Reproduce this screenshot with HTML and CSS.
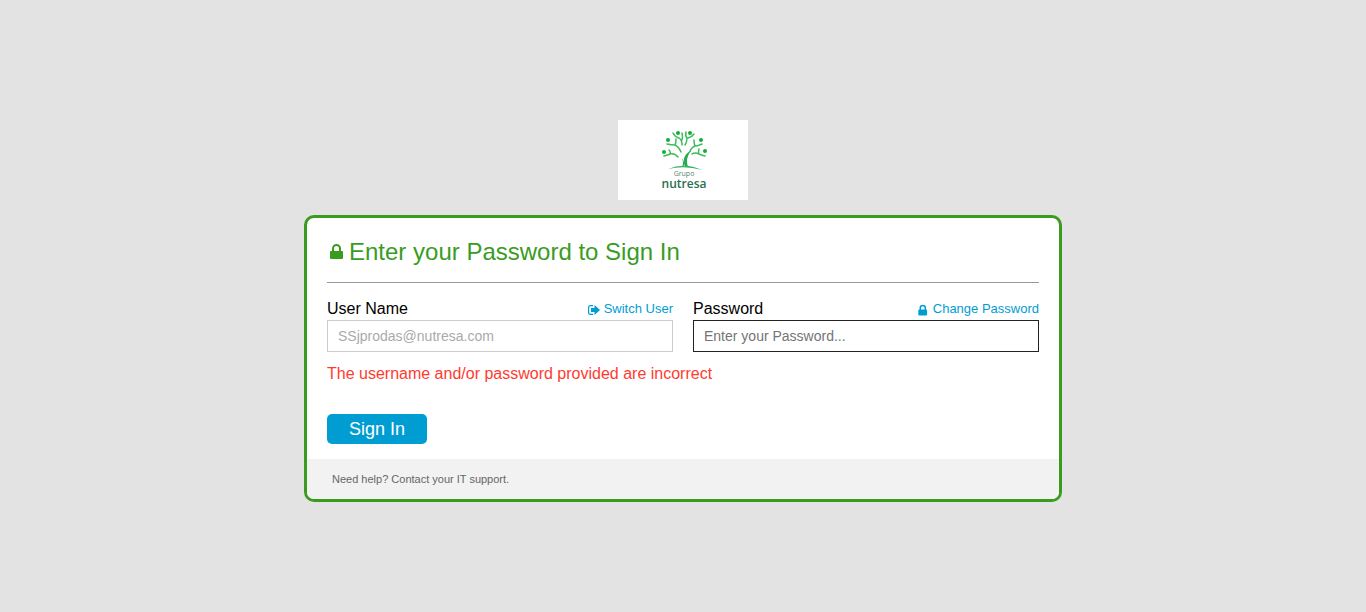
FILE: index.html
```html
<!DOCTYPE html>
<html lang="en">
<head>
<meta charset="utf-8">
<meta name="viewport" content="width=device-width, initial-scale=1">
<title>Sign In</title>
<link rel="stylesheet" href="styles.css">
</head>
<body>
<main class="page">
  <svg class="logo" viewBox="0 0 130 80" role="img" aria-label="Grupo nutresa">
    <g fill="none" stroke="#3cbd5c" stroke-linecap="round" stroke-width="1.5">
      <path d="M55 13Q57 17 61 18Q64 20 64 25M64 13Q65 17 64 20M68 12Q67 16 69 18Q69 22 67 25M76 14Q74 17 70 18M49 24Q54 25 57 25Q61 27 63 32M58 19Q58 23 57 25M84 24Q80 26 77 26Q74 27 72 31M76 20Q76 24 77 26M46 36Q50 35 52 34Q57 33 60 37M51 30Q53 32 52 34M87 36Q83 35 81 34Q77 32 74 34M81 29Q80 32 81 34"/>
    </g>
    <path fill="#25aa4c" d="M72 31Q67 34 66 39Q66 44 67 47L70 47Q68 41 70 36Q71 33 73 31ZM64 38Q66 43 64 47L65 47Q68 43 64 38Z"/>
    <path fill="#35b65a" d="M50 49Q67 42 84 50Q67 45 50 49Z"/>
    <g fill="#12ae39">
      <circle cx="60" cy="13" r="2"/><circle cx="72" cy="13" r="2"/>
      <circle cx="50" cy="20" r="2"/><circle cx="83" cy="20" r="2"/>
      <circle cx="46" cy="32" r="2"/><circle cx="87" cy="31" r="2"/>
    </g>
    <text class="logo-small" x="66" y="56" text-anchor="middle">Grupo</text>
    <text class="logo-name" x="66" y="68" text-anchor="middle">nutresa</text>
  </svg>

  <form class="card">
    <div class="card-body">
      <h1 class="title">
        <svg class="title-icon" viewBox="0 0 14 18" aria-hidden="true"><path fill="currentColor" d="M2 8V5.500a4.500 4.500 0 0 1 9 0V8h1q1 0 1 1v6q0 1-1 1H1q-1 0-1-1V9q0-1 1-1zM4 8h5V5.500a2.500 2.500 0 0 0-5 0z"/></svg>
        Enter your Password to Sign In
      </h1>
      <div class="fields">
        <div class="field">
          <div class="field-head">
            <label for="user">User Name</label>
            <a class="link" href="#switch"><svg class="link-icon" viewBox="0 0 12 12" aria-hidden="true"><path fill="none" stroke="currentColor" stroke-width="1.2" d="M5 1.600H2.500Q.6 1.600.6 3.500v5Q.6 10.400 2.500 10.400H5"/><path fill="currentColor" d="M3 4H6.500V1L12 6 6.500 11V8H3Z"/></svg>Switch User</a>
          </div>
          <input class="input" id="user" type="text" value="SSjprodas@nutresa.com" disabled>
        </div>
        <div class="field">
          <div class="field-head">
            <label for="password">Password</label>
            <a class="link" href="#change"><svg class="link-icon" viewBox="0 0 12 12" aria-hidden="true"><path fill="currentColor" d="M2.500 5.500V4a3.300 3.300 0 0 1 6.600 0v1.500q1 0 1 1V10.500q0 1-1 1H2.300q-1 0-1-1V6.500q0-1 1.200-1zM4 5.500h3.600V4a1.800 1.800 0 0 0-3.600 0z"/></svg>Change Password</a>
          </div>
          <input class="input input-active" id="password" type="password" placeholder="Enter your Password...">
        </div>
      </div>
      <p class="error" role="alert">The username and/or password provided are incorrect</p>
      <button class="submit" type="submit">Sign In</button>
    </div>
    <footer class="help">Need help? Contact your IT support.</footer>
  </form>
</main>
</body>
</html>
```
FILE: styles.css
```css
* {
  box-sizing: border-box;
}

body {
  margin: 0;
  background: #e3e3e3;
  color: #000;
  font-family: "Liberation Sans", Arial, sans-serif;
  font-size: 16px;
  line-height: 20px;
}

.page {
  display: flex;
  flex-direction: column;
  align-items: center;
  gap: 15px;
  padding: 120px 16px 32px;
}

.logo {
  width: 130px;
  background: #fff;
}

.logo-small {
  fill: #5e7f6f;
  font: 7px "Open Sans", sans-serif;
}

.logo-name {
  fill: #2b7050;
  font: 600 12px "Open Sans", sans-serif;
}

.card {
  width: 100%;
  max-width: 758px;
  overflow: hidden;
  border: 3px solid #3a9c1f;
  border-radius: 10px;
  background: #fff;
}

.card-body {
  padding: 20px 20px 15px;
}

.title {
  display: flex;
  align-items: center;
  gap: 5px;
  margin: 0 0 16px;
  padding: 0 0 16px 3px;
  border-bottom: 1px solid #999;
  color: #3a9c1f;
  font-size: 24px;
  font-weight: 400;
  line-height: 28px;
}

.title-icon {
  width: 14px;
  height: 18px;
}

.fields {
  display: grid;
  grid-template-columns: repeat(auto-fit, minmax(260px, 1fr));
  gap: 20px;
}

.field-head {
  display: flex;
  justify-content: space-between;
  margin-bottom: 1px;
}

.link {
  display: flex;
  align-items: center;
  gap: 4px;
  color: #009dd3;
  font-size: 13px;
  text-decoration: none;
}

.link-icon {
  width: 12px;
  height: 12px;
  margin-top: 2px;
}

.input {
  display: block;
  width: 100%;
  height: 32px;
  padding: 0 10px;
  border: 1px solid #ccc;
  border-radius: 0;
  background: #fff;
  color: #aaa;
  font: 14px "Liberation Sans", Arial, sans-serif;
}

.input-active {
  border-color: #222;
  color: #222;
}

.input::placeholder {
  color: #757575;
}

.error {
  margin: 12px 0 30px;
  color: #ff3b30;
}

.submit {
  display: block;
  width: 100px;
  height: 30px;
  padding: 0;
  border: 0;
  border-radius: 5px;
  background: #009dd3;
  color: #fff;
  font: 18px "Liberation Sans", Arial, sans-serif;
}

.help {
  padding: 10px 25px;
  background: #f2f2f2;
  color: #666;
  font-size: 11px;
}
```
